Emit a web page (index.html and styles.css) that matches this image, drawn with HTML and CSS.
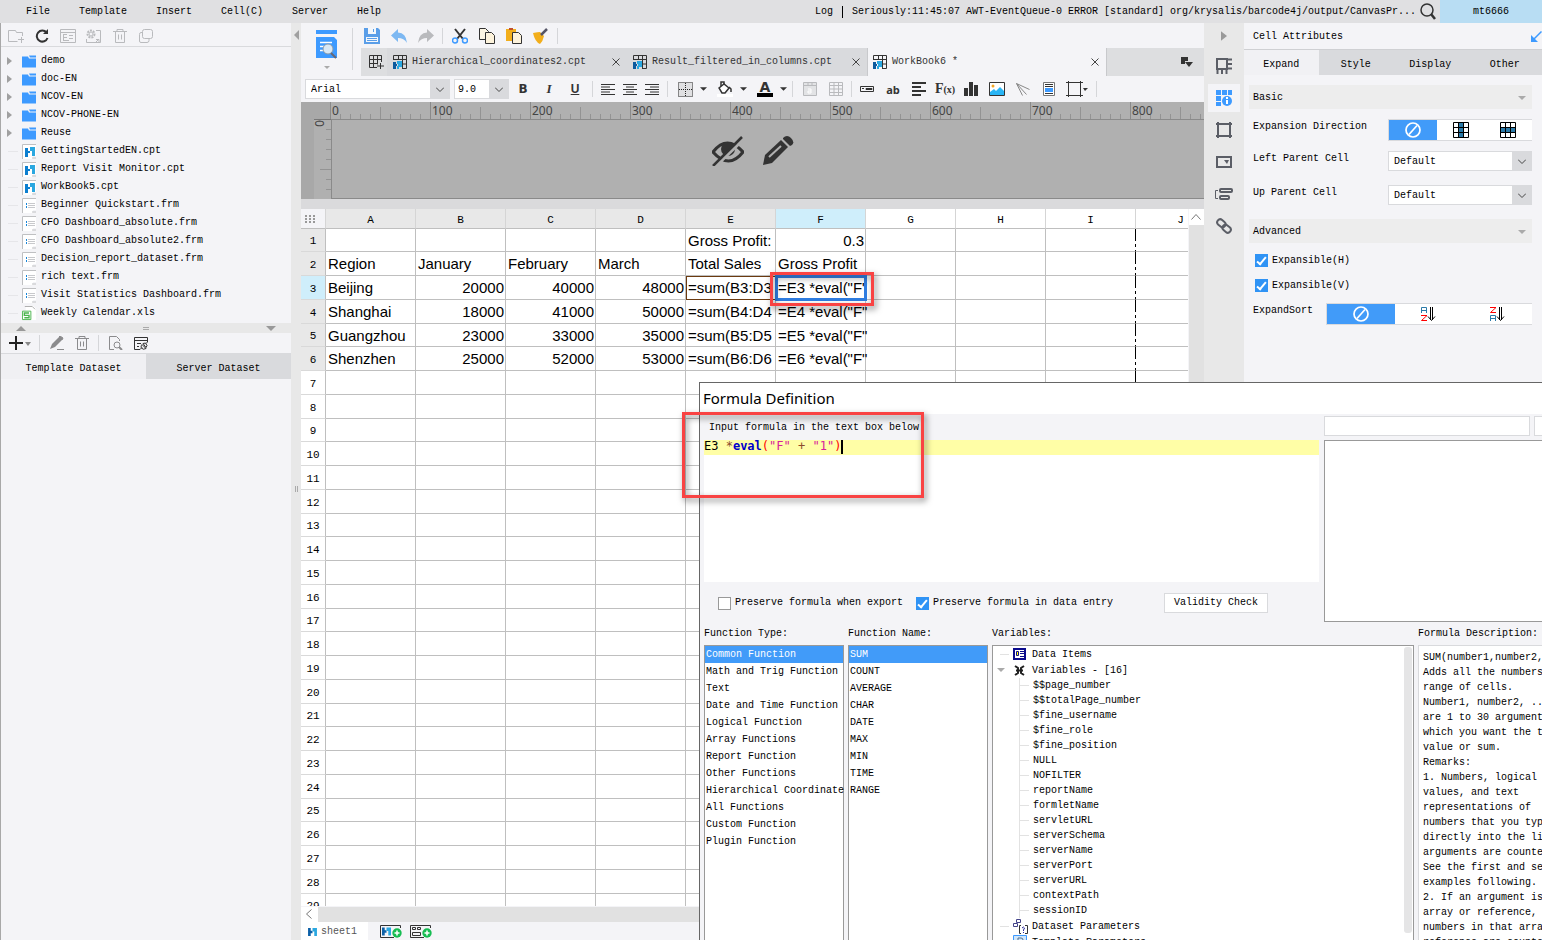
FILE: index.html
```html
<!DOCTYPE html>
<html lang="en">
<head>
    <meta charset="UTF-8">
    <meta name="viewport" content="width=device-width, initial-scale=1.0">
    <title>Report Designer</title>
    <link rel="stylesheet" href="styles.css">
</head>
<body>
    <svg class="defs" width="0" height="0">
        <symbol id="folder" viewBox="0 0 14 12"><path d="M0 1h6l1 2h7v9H0z" fill="#3d9aff"/><path d="M7 0h7v2H8z" fill="#3d9aff"/></symbol>
        <symbol id="logo" viewBox="0 0 10 9"><path d="M0 0h3v3h2v3H3v3H0z" fill="#0c60a8"/><path d="M5 0h5v9H7V4H5z" fill="#2aa7e0"/></symbol>
        <symbol id="cpt" viewBox="0 0 14 15"><path d="M0 0h14v12h-3v3H0z" fill="#fff"/><path d="M.5 15V.5H14M10 14h4" stroke="#bfc0c2" fill="none"/><path d="M3 4h3v3h2v2H6v4H3z" fill="#0c7fd0"/><path d="M8 3h5v9h-3V7H8z" fill="#2aa7e0"/></symbol>
        <symbol id="frm" viewBox="0 0 14 15"><path d="M0 0h14v12h-3v3H0z" fill="#fff"/><path d="M.5 15V.5H14M10 14h4" stroke="#bfc0c2" fill="none"/><path d="M4.500 5v2M4.500 8v2" stroke="#1685d8"/><path d="M6 5.500h7M6 9.500h7M6 7.500h7" stroke="#c8c9cc"/></symbol>
        <symbol id="xls" viewBox="0 0 15 16"><path d="M4 0h8l3 3v12H4z" fill="#fff"/><path d="M3 0.500h8l3 3" stroke="#aaa" fill="none"/><path d="M0.500 5.500h9v9h-9z" fill="#fff" stroke="#49b44c"/><path d="M7.500 7.500h-5V10h5v2.500h-5" stroke="#49b44c" stroke-width="1.500" fill="none"/></symbol>
        <symbol id="book" viewBox="0 0 14 14"><path d="M.5 5V.5h13v13H9M.5 4.500h13M5.500 .5v4M9.500 .5v13M9 9h4.500" stroke="#333" fill="none"/><path d="M0 7h3v2h1v2H3v3H0z" fill="#0c5a9e"/><path d="M4 6h5v6H6v2H4v-3h1V9H4z" fill="#2aa7e0"/></symbol>
        <symbol id="close" viewBox="0 0 8 8"><path d="M.5 .5l7 7M7.500 .5l-7 7" stroke="#444" fill="none"/></symbol>
        <symbol id="chev" viewBox="0 0 8 5"><path d="M0 .5l4 4 4-4" stroke="#444" fill="none"/></symbol>
        <symbol id="down" viewBox="0 0 8 4"><path d="M0 0h8L4 4z" fill="currentColor"/></symbol>
        <symbol id="right" viewBox="0 0 5 8"><path d="M0 0l5 4-5 4z" fill="currentColor"/></symbol>
        <symbol id="trash" viewBox="0 0 14 14"><path d="M0 2.500h14M4 2.500v-2h6v2M2.500 3v10.500h9V3M5.500 5.500v5M8.500 5.500v5" stroke="currentColor" fill="none"/></symbol>
        <symbol id="ban" viewBox="0 0 16 16"><circle cx="8" cy="8" r="7" stroke="#fff" stroke-width="1.700" fill="none"/><path d="M12 3.500L4 12.500" stroke="#fff" stroke-width="1.700"/></symbol>
        <symbol id="plusdot" viewBox="0 0 10 10"><circle cx="5" cy="5" r="4.700" fill="#16bd52"/><path d="M5 2.500v5M2.500 5h5" stroke="#fff" stroke-width="1.500"/></symbol>
    </svg>

    <header class="menubar">
        <nav class="menu">
            <a href="#">File</a>
            <a href="#">Template</a>
            <a href="#">Insert</a>
            <a href="#">Cell(C)</a>
            <a href="#">Server</a>
            <a href="#">Help</a>
        </nav>
        <div class="log"><span>Log</span><i></i><span>Seriously:11:45:07 AWT-EventQueue-0 ERROR [standard] org/krysalis/barcode4j/output/CanvasPr...</span></div>
        <button class="search" aria-label="Search"><svg width="16" height="17"><circle cx="7" cy="7" r="6" stroke="#333" stroke-width="1.500" fill="none"/><path d="M11 11l4 5" stroke="#333" stroke-width="2.500"/></svg></button>
        <button class="user">mt6666</button>
    </header>

    <main class="workspace">
        <aside class="left">
            <div class="tools files-tools">
                <button aria-label="New folder"><svg width="16" height="13"><path d="M14.500 6V2.500h-6l-1-2h-7v11h9M13.500 7v6M10 9.500h6" stroke="#b9babd" fill="none"/></svg></button>
                <button aria-label="Refresh"><svg width="14" height="14"><path d="M11.500 3.500A5.500 5.500 0 1 0 12.500 9" stroke="#333" stroke-width="2" fill="none"/><path d="M13 0v5H8z" fill="#333"/></svg></button>
                <button aria-label="Location"><svg width="16" height="14"><path d="M.5 .5h15v13H.500zM.5 3.500h15M3 5.500h4M3.500 6v6M3 8.500h4M3 11.500h6M9 6.500h4M9 9.500h4" stroke="#b9babd" fill="none"/></svg></button>
                <button aria-label="Permission"><svg width="16" height="14"><circle cx="5" cy="5" r="3.500" stroke="#b9babd" stroke-width="2" stroke-dasharray="2 1" fill="none"/><circle cx="5" cy="5" r="2" stroke="#b9babd" fill="none"/><path d="M10 1.500h4.500v12H.500V10M10 10.500h3v3M10 13l3-3" stroke="#b9babd" fill="none"/></svg></button>
                <button aria-label="Delete"><svg width="14" height="14" color="#b9babd"><use href="#trash"/></svg></button>
                <button aria-label="Copy"><svg width="14" height="14"><rect x="3.500" y=".5" width="10" height="9" rx="2" stroke="#b9babd" fill="none"/><path d="M3 3.500H2q-1.500 0-1.500 2V12q0 1.500 1.500 1.500h6q2 0 2-2v-2" stroke="#b9babd" fill="none"/></svg></button>
            </div>
            <ul class="file-tree">
                <li class="dir"><svg class="arr"><use href="#right"/></svg><svg class="ico"><use href="#folder"/></svg>demo</li>
                <li class="dir"><svg class="arr"><use href="#right"/></svg><svg class="ico"><use href="#folder"/></svg>doc-EN</li>
                <li class="dir"><svg class="arr"><use href="#right"/></svg><svg class="ico"><use href="#folder"/></svg>NCOV-EN</li>
                <li class="dir"><svg class="arr"><use href="#right"/></svg><svg class="ico"><use href="#folder"/></svg>NCOV-PHONE-EN</li>
                <li class="dir"><svg class="arr"><use href="#right"/></svg><svg class="ico"><use href="#folder"/></svg>Reuse</li>
                <li><i></i><svg class="ico"><use href="#cpt"/></svg>GettingStartedEN.cpt</li>
                <li><i></i><svg class="ico"><use href="#cpt"/></svg>Report Visit Monitor.cpt</li>
                <li><i></i><svg class="ico"><use href="#cpt"/></svg>WorkBook5.cpt</li>
                <li><i></i><svg class="ico"><use href="#frm"/></svg>Beginner Quickstart.frm</li>
                <li><i></i><svg class="ico"><use href="#frm"/></svg>CFO Dashboard_absolute.frm</li>
                <li><i></i><svg class="ico"><use href="#frm"/></svg>CFO Dashboard_absolute2.frm</li>
                <li><i></i><svg class="ico"><use href="#frm"/></svg>Decision_report_dataset.frm</li>
                <li><i></i><svg class="ico"><use href="#frm"/></svg>rich text.frm</li>
                <li><i></i><svg class="ico"><use href="#frm"/></svg>Visit Statistics Dashboard.frm</li>
                <li><i></i><svg class="ico"><use href="#xls"/></svg>Weekly Calendar.xls</li>
            </ul>
            <div class="splitter">
                <svg width="10" height="5"><path d="M0 5l5-5 5 5z" fill="#999"/></svg>
                <svg width="6" height="3"><path d="M0 .5h6M0 2.500h6" stroke="#aaa"/></svg>
                <svg width="10" height="5"><path d="M0 0h10L5 5z" fill="#999"/></svg>
            </div>
            <div class="tools data-tools">
                <button class="add" aria-label="Add dataset"><svg width="22" height="14"><path d="M7 0v14M0 7h14" stroke="#222" stroke-width="2"/><path d="M16 6h6l-3 4z" fill="#888"/></svg></button>
                <span class="sep"></span>
                <button aria-label="Edit"><svg width="14" height="14"><path d="M0 13l2-5 7-7 3 3-7 7z" fill="#8b8b8d"/><path d="M10 0l3 2-1 2-3-3zM7 13.500h7" fill="#8b8b8d" stroke="#8b8b8d"/></svg></button>
                <button aria-label="Delete"><svg width="14" height="14" color="#8b8b8d"><use href="#trash"/></svg></button>
                <span class="sep"></span>
                <button aria-label="Preview"><svg width="14" height="14"><path d="M5 13.500H.500V.500h7l3 3V5" stroke="#8b8b8d" fill="none"/><circle cx="8" cy="9" r="3" stroke="#8b8b8d" fill="none"/><path d="M10 11l3 3" stroke="#8b8b8d" stroke-width="2"/></svg></button>
                <button aria-label="Connection"><svg width="14" height="13"><path d="M13.500 5V.5H.500v12H6M.5 3.500h13M3 6.500h4M3 9.500h2" stroke="#333" fill="none"/><path d="M6 12.500l2-2M12 6.500l2-2M8 7.500l4 4q-3 2-5-1 0-2 1-3zM9 6.500q3-2 4 2l-1 2z" stroke="#333" fill="none"/></svg></button>
            </div>
            <div class="data-tabs">
                <button class="on">Template Dataset</button>
                <button>Server Dataset</button>
            </div>
        </aside>

        <div class="gutter"><svg width="5" height="10"><path d="M5 0v10L0 5z" fill="#a0a0a0"/></svg><svg width="3" height="6"><path d="M.5 0v6M2.500 0v6" stroke="#aaa"/></svg></div>

        <section class="center">
            <div class="top">
                <button class="preview" aria-label="Preview">
                    <svg width="24" height="40"><path d="M1 0h21v4H1zM1 7h18l3 3v18H1z" fill="#3d9aff"/><path d="M5 12.500h12M5 16.500h5M5 20.500h5" stroke="#fff" stroke-width="1.500"/><circle cx="13" cy="19" r="5" fill="#d8e8f5" stroke="#8b9aa8"/><path d="M16 23l5 5" stroke="#667" stroke-width="2"/><path d="M9 36h6l-3 3z" fill="#aaa"/></svg>
                </button>
                <div class="top-right">
                    <div class="tools quick">
                        <button aria-label="Save"><svg width="16" height="16"><path d="M0 0h14l2 2v14H0z" fill="#5a9ee8"/><path d="M4 0h8v6H4zM2 9h12v5H2z" fill="#f4f7fb"/><path d="M9.500 1v3M3 10.500h10M3 12.500h10" stroke="#5a9ee8"/></svg></button>
                        <button aria-label="Undo"><svg width="16" height="14"><path d="M7 0v3.500q8 0 9 10.500-3-5-9-5v4L0 6.500z" fill="#7db8f2"/></svg></button>
                        <button aria-label="Redo"><svg width="16" height="14"><path d="M9 0v3.500Q1 3.500 0 14q3-5 9-5v4l7-6.500z" fill="#b9babd"/></svg></button>
                        <span class="sep"></span>
                        <button aria-label="Cut"><svg width="16" height="16"><path d="M3 1l8 10M13 1L5 11" stroke="#333" stroke-width="2"/><circle cx="3" cy="12.500" r="2.500" stroke="#3d9aff" stroke-width="1.500" fill="none"/><circle cx="13" cy="12.500" r="2.500" stroke="#3d9aff" stroke-width="1.500" fill="none"/></svg></button>
                        <button aria-label="Copy"><svg width="16" height="16"><path d="M.5 .5h6l3 3v8h-9z" fill="#fdf6e3" stroke="#333"/><path d="M6.500 4.500h6l3 3v8h-9z" fill="#fdf3dc" stroke="#333"/></svg></button>
                        <button aria-label="Paste"><svg width="16" height="16"><path d="M0 1h10v12H0z" fill="#f2ae1b"/><path d="M3 0h4v2H3z" fill="#c0502c"/><path d="M6.500 4.500h6l3 3v8h-9z" fill="#fdf3dc" stroke="#333"/></svg></button>
                        <button aria-label="Format painter"><svg width="16" height="16"><path d="M0 5q5-1 7-1l4 4q-1 5-4 8-5-2-7-11z" fill="#f2ae1b"/><path d="M8 7l6-6" stroke="#556" stroke-width="2.500"/></svg></button>
                        <span class="sep"></span>
                    </div>
                    <div class="doc-tabs">
                        <button class="new-tab" aria-label="New"><svg width="15" height="14"><path d="M8 12.500H.500V.500h12V7M.5 4.500h12M.5 8.500h8M4.500 .5v12M8.500 .5v9M11.500 8v6M8 11h7" stroke="#333" fill="none"/></svg></button>
                        <div class="doc-tab"><svg width="14" height="14"><use href="#book"/></svg><span>Hierarchical_coordinates2.cpt</span><button aria-label="Close"><svg width="8" height="8"><use href="#close"/></svg></button></div>
                        <div class="doc-tab"><svg width="14" height="14"><use href="#book"/></svg><span>Result_filtered_in_columns.cpt</span><button aria-label="Close"><svg width="8" height="8"><use href="#close"/></svg></button></div>
                        <div class="doc-tab on"><svg width="14" height="14"><use href="#book"/></svg><span>WorkBook6 *</span><button aria-label="Close"><svg width="8" height="8"><use href="#close"/></svg></button></div>
                        <button class="tab-list" aria-label="Tab list"><svg width="12" height="10"><path d="M0 0h7v4H4v3H0z" fill="#333"/><path d="M4 5h8L8 10z" fill="#333"/></svg></button>
                    </div>
                </div>
            </div>

            <div class="tools format">
                <span class="combo font"><select aria-label="Font"><option>Arial</option></select><i><svg width="8" height="5"><use href="#chev"/></svg></i></span>
                <span class="combo size"><select aria-label="Size"><option>9.0</option></select><i><svg width="8" height="5"><use href="#chev"/></svg></i></span>
                <button class="b">B</button>
                <button class="i">I</button>
                <button class="u">U</button>
                <span class="sep"></span>
                <button class="al" aria-label="Align left"><svg width="14" height="11"><path d="M0 .5h14M0 3h9M0 5.500h14M0 8h9M0 10.500h14" stroke="#333"/></svg></button>
                <button class="al" aria-label="Align center"><svg width="14" height="11"><path d="M0 .5h14M3 3h8M0 5.500h14M3 8h8M0 10.500h14" stroke="#333"/></svg></button>
                <button class="al" aria-label="Align right"><svg width="14" height="11"><path d="M0 .5h14M5 3h9M0 5.500h14M5 8h9M0 10.500h14" stroke="#333"/></svg></button>
                <span class="sep"></span>
                <button aria-label="Border"><svg width="15" height="15"><path d="M.5 .5h14v14H.500zM7.500 1v13M1 7.500h13" stroke="#222" stroke-dasharray="1 1" fill="#e0e0e2"/></svg></button>
                <button class="dd" aria-label="Border options"><svg width="7" height="4"><use href="#down"/></svg></button>
                <button aria-label="Fill"><svg width="16" height="16"><path d="M2 7l5-4 5 4-4 5H5z" fill="#fff" stroke="#333" stroke-width="1.500"/><path d="M4 5V1h3v3M12 6l2 2v3" stroke="#333" stroke-width="1.500" fill="none"/><path d="M0 13h16v3H0z" fill="#fff"/></svg></button>
                <button class="dd" aria-label="Fill options"><svg width="7" height="4"><use href="#down"/></svg></button>
                <button class="fc">A</button>
                <button class="dd" aria-label="Color options"><svg width="7" height="4"><use href="#down"/></svg></button>
                <span class="sep"></span>
                <button aria-label="Merge"><svg width="14" height="14"><path d="M.5 .5h13v13H.500zM.5 3.500h13M5 0v3M9 0v3" stroke="#b9babd" fill="#e2e3e5"/><path d="M5 7h3v4H5V9h3" stroke="#fff" fill="none"/></svg></button>
                <button aria-label="Unmerge"><svg width="14" height="14"><path d="M.5 .5h13v13H.500zM.5 3.500h13M.5 7h13M.5 10.500h13M5 0v14M9.500 0v14" stroke="#b9babd" fill="none"/></svg></button>
                <span class="sep tight"></span>
                <button aria-label="Widget"><svg width="14" height="6"><path d="M.5 .5h13v5H.500zM2 2.500h2M6 2.500h6v1H6z" stroke="#333" fill="none"/></svg></button>
                <button class="ab">ab</button>
                <button aria-label="Rich text"><svg width="14" height="14"><path d="M0 1h14M0 5h9M0 9h14M0 13h9" stroke="#333" stroke-width="2"/></svg></button>
                <button class="fx">F<small>(x)</small></button>
                <button aria-label="Chart"><svg width="14" height="14"><path d="M0 6h4v8H0zM5 0h4v14H5zM10 3h4v11h-4z" fill="#333"/></svg></button>
                <button aria-label="Image"><svg width="16" height="14"><path d="M.5 .5h15v13H.500z" fill="#fff" stroke="#333"/><path d="M1 10l4-3 2 2 4-4 4 4v4H1z" fill="#29b5f5"/><circle cx="4" cy="4" r="1.500" fill="#f5a623"/></svg></button>
                <button aria-label="Slope"><svg width="14" height="13"><path d="M.5 .5l6 12M.5 .5l13 6M.5 .5l10 11" stroke="#888" fill="none"/></svg></button>
                <button aria-label="Sub report"><svg width="12" height="14"><path d="M.5 .5h11v13H.500z" fill="#fff" stroke="#777"/><path d="M2 2.500h8M2 4.500h8M2 11.500h8" stroke="#333"/><path d="M2 6h8v4H2z" fill="#3d9aff"/></svg></button>
                <button class="box" aria-label="Floating element"><svg width="23" height="16"><path d="M2.500 0v16M14.500 0v16M0 1.500h17M0 14.500h17" stroke="#333" fill="none"/><path d="M17 7h5l-3 3z" fill="#333"/></svg></button>
                <span class="sep"></span>
            </div>

            <div class="report">
                <div class="ruler-x"><span>0</span><span>100</span><span>200</span><span>300</span><span>400</span><span>500</span><span>600</span><span>700</span><span>800</span></div>
                <div class="report-row">
                    <div class="ruler-y"><span>0</span></div>
                    <div class="paper"></div>
                </div>
                <div class="report-icons">
                    <svg width="32" height="30"><path d="M1 16q14-18 30 0-14 18-30 0z" stroke="#333" stroke-width="3" fill="none"/><circle cx="16" cy="13" r="7" fill="#333"/><path d="M3 31L32 3" stroke="#b0b0b0" stroke-width="3"/><path d="M1 30L30 1" stroke="#333" stroke-width="2.500"/></svg>
                    <svg width="32" height="30"><path d="M1 29l2-10L19 4l7 7-16 16z" fill="#333"/><path d="M7 21L19 10" stroke="#b0b0b0" stroke-width="2"/><path d="M21 2q4-4 8 0t1 7l-2 1-7-7z" fill="#333"/></svg>
                </div>
            </div>

            <div class="sheet">
                <div class="grid">
                    <table>
                        <thead>
                            <tr><th class="corner"><svg width="11" height="8"><path d="M0 1h11M0 4h11M0 7h11" stroke="#999" stroke-width="2" stroke-dasharray="2 2"/></svg></th><th>A</th><th>B</th><th>C</th><th>D</th><th>E</th><th class="sel">F</th><th class="out">G</th><th class="out">H</th><th class="out">I</th><th class="out">J</th></tr>
                        </thead>
                        <tbody id="rows">
                            <tr><th>1</th><td></td><td></td><td></td><td></td><td>Gross Profit:</td><td class="num">0.3</td><td></td><td></td><td></td><td></td></tr>
                            <tr><th>2</th><td>Region</td><td>January</td><td>February</td><td>March</td><td>Total Sales</td><td>Gross Profit</td><td></td><td></td><td></td><td></td></tr>
                            <tr><th class="sel">3</th><td>Beijing</td><td class="num">20000</td><td class="num">40000</td><td class="num">48000</td><td class="parent">=sum(B3:D3</td><td class="current">=E3 *eval("F"</td><td></td><td></td><td></td><td></td></tr>
                            <tr><th>4</th><td>Shanghai</td><td class="num">18000</td><td class="num">41000</td><td class="num">50000</td><td>=sum(B4:D4</td><td>=E4 *eval("F"</td><td></td><td></td><td></td><td></td></tr>
                            <tr><th>5</th><td>Guangzhou</td><td class="num">23000</td><td class="num">33000</td><td class="num">35000</td><td>=sum(B5:D5</td><td>=E5 *eval("F"</td><td></td><td></td><td></td><td></td></tr>
                            <tr><th>6</th><td>Shenzhen</td><td class="num">25000</td><td class="num">52000</td><td class="num">53000</td><td>=sum(B6:D6</td><td>=E6 *eval("F"</td><td></td><td></td><td></td><td></td></tr>
                        </tbody>
                    </table>
                </div>
                <div class="vscroll"><svg width="10" height="6"><path d="M.5 5.500l4.500-5 4.500 5" stroke="#777" fill="none"/></svg></div>
            </div>
            <div class="hscroll"><svg width="6" height="10"><path d="M5.500 .5L.5 5l5 4.500" stroke="#777" fill="none"/></svg></div>
            <div class="sheet-tabs">
                <button class="on"><svg width="9" height="8"><use href="#logo"/></svg>sheet1</button>
                <button aria-label="Add sheet"><svg width="22" height="13"><path d="M14 12.500H.500V.500h20V3" stroke="#333" fill="none"/><use href="#logo" x="2" y="2" width="9" height="9"/><use href="#plusdot" x="12" y="3" width="10" height="10"/></svg></button>
                <button aria-label="Add form sheet"><svg width="22" height="13"><path d="M14 12.500H.500V.500h20V3M2.500 2.500h3v2h-3zM7.500 2.500h3v2h-3zM2.500 7.500h8v3h-8z" stroke="#333" fill="none"/><use href="#plusdot" x="12" y="3" width="10" height="10"/></svg></button>
            </div>
        </section>

        <nav class="strip">
            <button class="fold" aria-label="Collapse"><svg width="6" height="10" color="#999"><use href="#right"/></svg></button>
            <button aria-label="Cell element"><svg width="16" height="16"><path d="M1 1h10v10H1zM11 1.500h5M11 6h5M11 10.500h5M1.500 11v5M6 11v5M10.500 11v5" stroke="#5b5e66" stroke-width="2" fill="none"/></svg></button>
            <button class="on" aria-label="Cell attributes"><svg width="16" height="16"><path d="M0 0h5v5H0zM6 0h5v5H6zM12 0h4v5h-4zM0 6h5v5H0zM0 12h5v4H0z" fill="#3d9aff"/><circle cx="11" cy="11" r="5" fill="#3d9aff"/><path d="M11 7v2M11 10v4" stroke="#fff" stroke-width="2"/></svg></button>
            <button aria-label="Float element"><svg width="16" height="16"><path d="M2 0v16M14 0v16M0 2h16M0 14h16" stroke="#5b5e66" stroke-width="2" fill="none"/></svg></button>
            <button aria-label="Widget settings"><svg width="16" height="12"><rect x="1" y="1" width="14" height="10" stroke="#5b5e66" stroke-width="2" fill="none"/><path d="M8 4h5l-2 4z" fill="#5b5e66"/></svg></button>
            <button aria-label="Condition attributes"><svg width="18" height="13"><path d="M3 2.500H.500v8H3" stroke="#5b5e66" fill="none"/><rect x="5" y="1" width="12" height="3" rx="1" stroke="#5b5e66" stroke-width="2" fill="none"/><rect x="5" y="8" width="9" height="3" rx="1" stroke="#5b5e66" stroke-width="2" fill="none"/></svg></button>
            <button aria-label="Hyperlink"><svg width="16" height="16"><rect x="1" y="2" width="9" height="6" rx="3" transform="rotate(40 5 5)" stroke="#5b5e66" stroke-width="2" fill="none"/><rect x="6" y="8" width="9" height="6" rx="3" transform="rotate(40 11 11)" stroke="#5b5e66" stroke-width="2" fill="none"/></svg></button>
        </nav>

        <aside class="attrs">
            <div class="attrs-title">Cell Attributes<svg width="11" height="11"><path d="M10.500 .5L3 8" stroke="#3d9aff" stroke-width="1.500"/><path d="M0 4v7h7z" fill="#3d9aff"/></svg></div>
            <div class="attrs-tabs"><button class="on">Expand</button><button>Style</button><button>Display</button><button>Other</button></div>
            <div class="attrs-body">
                <h3>Basic<svg width="8" height="4" color="#aaa"><use href="#down"/></svg></h3>
                <div class="field basic">
                    <span>Expansion Direction</span>
                    <div class="seg">
                        <button class="on" aria-label="None"><svg width="16" height="16"><use href="#ban"/></svg></button>
                        <button aria-label="Vertical"><svg width="16" height="16"><path d="M6 1h5v14H6z" fill="#2b7aa8"/><path d="M.5 .5h15v15H.500zM5.500 0v16M10.500 0v16M0 5.500h16M0 10.500h16" stroke="#000" fill="none"/></svg></button>
                        <button aria-label="Horizontal"><svg width="16" height="16"><path d="M1 6h14v5H1z" fill="#2b7aa8"/><path d="M.5 .5h15v15H.500zM5.500 0v16M10.500 0v16M0 5.500h16M0 10.500h16" stroke="#000" fill="none"/></svg></button>
                    </div>
                </div>
                <div class="field basic">
                    <label for="left-parent">Left Parent Cell</label>
                    <span class="combo"><select id="left-parent"><option>Default</option></select><i><svg width="8" height="5"><use href="#chev"/></svg></i></span>
                </div>
                <div class="field basic">
                    <label for="up-parent">Up Parent Cell</label>
                    <span class="combo"><select id="up-parent"><option>Default</option></select><i><svg width="8" height="5"><use href="#chev"/></svg></i></span>
                </div>
                <h3>Advanced<svg width="8" height="4" color="#aaa"><use href="#down"/></svg></h3>
                <label class="check"><input type="checkbox" checked>Expansible(H)</label>
                <label class="check"><input type="checkbox" checked>Expansible(V)</label>
                <div class="field sort">
                    <span>ExpandSort</span>
                    <div class="seg">
                        <button class="on" aria-label="No sort"><svg width="16" height="16"><use href="#ban"/></svg></button>
                        <button aria-label="Ascending"><svg width="16" height="15"><path d="M.5 6V.500h5V6M.5 3.500h5" stroke="#2b7aa8" fill="none"/><path d="M0 8.500h6l-5.500 5H6" stroke="#f00" fill="none"/><path d="M9.500 0v13M11.500 0v13M7 9.500l3.500 4 3.500-4" stroke="#000" fill="none"/></svg></button>
                        <button aria-label="Descending"><svg width="16" height="15"><path d="M0 .5h6L.5 5.500H6" stroke="#f00" fill="none"/><path d="M.5 14V8.500h5V14M.5 11.500h5" stroke="#2b7aa8" fill="none"/><path d="M9.500 0v13M11.500 0v13M7 9.500l3.500 4 3.500-4" stroke="#000" fill="none"/></svg></button>
                    </div>
                </div>
            </div>
        </aside>
    </main>

    <div class="dialog" role="dialog" aria-label="Formula Definition">
        <h2>Formula Definition</h2>
        <div class="dialog-body">
            <div class="upper">
                <div class="formula">
                    <p>Input formula in the text box below:</p>
                    <div class="editor" contenteditable="true"><div class="line">E3 <span class="op">*</span><b>eval</b><span class="par">(</span><span class="str">"F"</span> <span class="op">+</span> <span class="str">"1"</span><span class="par">)</span><i class="cursor"></i></div></div>
                    <div class="options">
                        <label class="check"><input type="checkbox">Preserve formula when export</label>
                        <label class="check"><input type="checkbox" checked>Preserve formula in data entry</label>
                        <button class="validity">Validity Check</button>
                    </div>
                </div>
                <div class="finder">
                    <div class="finder-row"><input type="text" aria-label="Search function"><button aria-label="Search"></button></div>
                    <div class="results"></div>
                </div>
            </div>
            <div class="lower">
                <div class="col fn">
                    <h4>Function Type:</h4>
                    <ul class="list">
                        <li class="on">Common Function</li>
                        <li>Math and Trig Function</li>
                        <li>Text</li>
                        <li>Date and Time Function</li>
                        <li>Logical Function</li>
                        <li>Array Functions</li>
                        <li>Report Function</li>
                        <li>Other Functions</li>
                        <li>Hierarchical Coordinate</li>
                        <li>All Functions</li>
                        <li>Custom Function</li>
                        <li>Plugin Function</li>
                    </ul>
                </div>
                <div class="col fn">
                    <h4>Function Name:</h4>
                    <ul class="list">
                        <li class="on">SUM</li>
                        <li>COUNT</li>
                        <li>AVERAGE</li>
                        <li>CHAR</li>
                        <li>DATE</li>
                        <li>MAX</li>
                        <li>MIN</li>
                        <li>TIME</li>
                        <li>RANGE</li>
                    </ul>
                </div>
                <div class="col vars">
                    <h4>Variables:</h4>
                    <div class="vars-box">
                        <ul class="var-tree">
                            <li class="node"><i></i><svg width="13" height="12"><path d="M1 1h11v10H1z" fill="#fff" stroke="#0a0a8c" stroke-width="2"/><path d="M3.500 3.500h2v4h-2z" fill="#ff0" stroke="#0a0a8c"/><path d="M7 3.500h4M7 5.500h4M7 8.500h4" stroke="#0a0a8c"/></svg>Data Items</li>
                            <li class="node"><svg class="open" width="8" height="4" color="#aaa"><use href="#down"/></svg><svg width="13" height="11"><path d="M2 1l3 2v5l-3 2M11 1L8 3v5l3 2M3 5.500h7" stroke="#222" stroke-width="2" fill="none"/></svg>Variables - [16]</li>
                            <li>$$page_number</li>
                            <li>$$totalPage_number</li>
                            <li>$fine_username</li>
                            <li>$fine_role</li>
                            <li>$fine_position</li>
                            <li>NULL</li>
                            <li>NOFILTER</li>
                            <li>reportName</li>
                            <li>formletName</li>
                            <li>servletURL</li>
                            <li>serverSchema</li>
                            <li>serverName</li>
                            <li>serverPort</li>
                            <li>serverURL</li>
                            <li>contextPath</li>
                            <li>sessionID</li>
                            <li class="node"><i></i><svg width="15" height="15"><path d="M3.500 .5h4v3h-4zM.5 4.500h4v3h-4z" fill="#fff" stroke="#44448a"/><path d="M8 6.500H6.500v8H8M12 6.500h2.500v8H12" stroke="#333" fill="none"/><path d="M9 9q1.500-2 2.500 0l-1 2v1M10.500 13v1" stroke="#2a2a9c" fill="none"/></svg>Dataset Parameters</li>
                            <li class="node"><i></i><svg width="14" height="14"><path d="M.5 .5h13v13H.500z" fill="#cfe6fb" stroke="#3d9aff"/><path d="M5 11V3h3q2 0 2 2t-2 2H5" stroke="#55708a" fill="none"/></svg>Template Parameters</li>
                        </ul>
                        <div class="bar"></div>
                    </div>
                </div>
                <div class="col desc">
                    <h4>Formula Description:</h4>
                    <pre>SUM(number1,number2,...)
Adds all the numbers in a
range of cells.
Number1, number2, ...
are 1 to 30 arguments for
which you want the total
value or sum.
Remarks:
1. Numbers, logical
values, and text
representations of
numbers that you type
directly into the list of
arguments are counted.
See the first and second
examples following.
2. If an argument is an
array or reference, only
numbers in that array or
reference are counted.</pre>
                </div>
            </div>
        </div>
    </div>

    <div class="mark mark-cell"></div>
    <div class="mark mark-formula"></div>

    <script>
        // fill the rest of the sheet with empty rows
        const rows = document.getElementById('rows');
        for (let n = 7; n <= 60; n++) {
            const tr = document.createElement('tr');
            tr.innerHTML = '<th class="out">' + n + '</th>' + '<td></td>'.repeat(10);
            rows.appendChild(tr);
        }
    </script>
</body>
</html>
```

FILE: styles.css
```css
* {
    box-sizing: border-box;
}
body {
    margin: 0;
    height: 100vh;
    overflow: hidden;
    position: relative;
    display: flex;
    flex-direction: column;
    background: #f4f4f7;
    color: #000;
    font: 10px/14px "Liberation Mono", "Courier New", monospace;
}
button, input, select {
    font: inherit;
    color: inherit;
    border: 0;
    padding: 0;
    margin: 0;
    background: none;
    border-radius: 0;
}
ul, h2, h3, h4, p, pre {
    margin: 0;
    padding: 0;
    font: inherit;
    list-style: none;
}
svg {
    display: block;
    flex: none;
}
.defs {
    position: absolute;
}

/* menu bar */
.menubar {
    display: flex;
    align-items: center;
    height: 23px;
    flex: none;
    background: #e0e0e2;
}
.menu {
    display: flex;
    gap: 29px;
    padding-left: 26px;
    flex: 1;
}
.menu a {
    color: #000;
    text-decoration: none;
}
.log {
    display: flex;
    align-items: center;
    gap: 9px;
    white-space: nowrap;
}
.log i {
    width: 1px;
    height: 12px;
    background: #000;
}
.search {
    margin: 0 4px;
}
.user {
    width: 102px;
    height: 23px;
    background: #b8ddf3;
}

.workspace {
    flex: 1;
    min-height: 0;
    display: grid;
    grid-template-columns: 291px 10px minmax(0, 1fr) 40px 298px;
    grid-template-rows: minmax(0, 1fr);
}
.tools {
    display: flex;
    align-items: center;
}
.tools button {
    display: flex;
    align-items: center;
    justify-content: center;
}
.sep {
    width: 1px;
    height: 16px;
    margin: 0 4px;
    background: #d5d6d9;
}

/* left panel */
.left {
    border-left: 1px solid #a8a8a8;
}
.files-tools {
    height: 24px;
    padding: 3px 0 0 2px;
    border-bottom: 1px solid #d9dadd;
}
.files-tools button {
    width: 26px;
}
.file-tree {
    padding: 5px 0 1px 6px;
}
.file-tree li {
    display: flex;
    align-items: center;
    height: 18px;
    white-space: pre;
}
.file-tree .arr {
    width: 5px;
    height: 8px;
    margin-right: 10px;
    color: #a0a0a0;
}
.file-tree i {
    width: 10px;
    height: 1px;
    margin: 0 4px 0 1px;
    background: #e6e6e9;
}
.file-tree .ico {
    width: 14px;
    height: 15px;
    margin-right: 5px;
}
.splitter {
    display: flex;
    align-items: center;
    justify-content: space-between;
    height: 10px;
    padding: 0 15px;
    background: #e8e8e8;
}
.data-tools {
    height: 21px;
    padding-left: 4px;
    border-bottom: 1px solid #d9dadd;
}
.data-tools button {
    width: 25px;
}
.data-tools .add {
    width: 30px;
}
.data-tabs {
    display: flex;
    height: 25px;
}
.data-tabs button {
    flex: 1;
    padding-top: 4px;
    background: #d9dadd;
}
.data-tabs .on {
    background: #f0f0f3;
}
.gutter {
    display: flex;
    flex-direction: column;
    align-items: center;
    justify-content: space-between;
    padding: 7px 0 448px;
    background: #e8e8e8;
}

/* toolbars */
.center {
    display: flex;
    flex-direction: column;
    min-width: 0;
}
.top {
    display: flex;
    height: 53px;
    flex: none;
}
.preview {
    width: 52px;
    height: 42px;
    margin: 5px 8px 0 0;
    border-right: 1px solid #d5d6d9;
    display: flex;
    justify-content: center;
    padding-top: 2px;
}
.top-right {
    flex: 1;
    min-width: 0;
}
.quick {
    height: 25px;
    margin-left: -3px;
}
.quick button {
    width: 27px;
}
.quick .sep {
    margin: 0 3px;
}
.doc-tabs {
    display: flex;
    height: 28px;
    background: #dddee0;
    color: #333;
}
.new-tab {
    width: 26px;
    padding-left: 8px;
}
.doc-tab {
    display: flex;
    align-items: center;
    width: 240px;
    padding: 0 7px 0 6px;
    background: #d9dadd;
}
.doc-tab span {
    flex: 1;
    margin-left: 5px;
    white-space: nowrap;
}
.doc-tab.on {
    background: #f4f4f7;
    border: solid #c8c9cc;
    border-width: 0 1px;
    padding-left: 5px;
}
.tab-list {
    margin-left: auto;
    padding-right: 11px;
}
.format {
    height: 26px;
    flex: none;
    padding-left: 4px;
    color: #333;
}
.format button {
    width: 26px;
    height: 22px;
}
.format .al {
    width: 22px;
}
.format .dd {
    width: 10px;
    margin-right: 4px;
}
.format .dd:has(+ .sep) {
    margin-right: 0;
}
.format .tight {
    margin: 0 2px;
}
.format .b {
    font: bold 12px "DejaVu Sans", sans-serif;
}
.format .ab {
    font: bold 11px "Open Sans", sans-serif;
}
.format .i {
    font: italic bold 13px "Liberation Serif", serif;
}
.format .u {
    font: bold 12px "Liberation Sans", sans-serif;
    text-decoration: underline;
}
.format .fc {
    width: 16px;
    height: 16px;
    margin: 0 5px;
    border-bottom: 4px solid #000;
    font: bold 14px "DejaVu Sans", sans-serif;
}
.format .fx {
    font: bold 14px "Liberation Serif", serif;
}
.fx small {
    font-size: 10px;
}
.format .box {
    width: 30px;
}
.combo {
    display: flex;
    height: 20px;
    border: 1px solid #d9dadd;
    background: #fff;
    color: #000;
}
.combo select {
    appearance: none;
    flex: 1;
    min-width: 0;
    padding: 1px 0 0 5px;
    outline: none;
}
.combo i {
    width: 19px;
    display: flex;
    align-items: center;
    justify-content: center;
    background: #d9dadd;
}
.font {
    width: 145px;
    margin-right: 4px;
}
.size {
    width: 55px;
    margin-right: 1px;
}
.size select {
    padding-left: 3px;
}

/* report header with rulers */
.report {
    position: relative;
    height: 97px;
    flex: none;
    display: flex;
    flex-direction: column;
    background: #a8a8a8;
}
.ruler-x {
    display: flex;
    height: 17px;
    margin-left: 29px;
    overflow: hidden;
    color: #444;
    font: 12px/18px "Noto Sans", sans-serif;
    background:
        linear-gradient(90deg, #8a8a8a 1px, transparent 1px) 0 0 / 100px 17px repeat-x,
        linear-gradient(90deg, #939393 1px, transparent 1px) 0 5px / 50px 12px repeat-x,
        linear-gradient(90deg, #939393 1px, transparent 1px) 0 12px / 10px 5px repeat-x,
        #b0b0b0;
}
.ruler-x span {
    flex: 0 0 100px;
    padding-left: 2px;
}
.report-row {
    flex: 1;
    display: flex;
}
.ruler-y {
    width: 17px;
    margin-left: 13px;
    border-top: 1px solid #777;
    color: #444;
    font: 12px/17px "Noto Sans", sans-serif;
    writing-mode: vertical-rl;
    background:
        linear-gradient(#939393 1px, transparent 1px) 6px 49px / 11px 50px repeat-y,
        linear-gradient(#939393 1px, transparent 1px) 12px 9px / 5px 10px repeat-y,
        #b0b0b0;
}
.ruler-y span {
    display: block;
    margin-right: 3px;
}
.paper {
    flex: 1;
    border: solid #8a8a8a;
    border-width: 1px 0 1px 1px;
    background: #b0b0b0;
}
.report-icons {
    position: absolute;
    inset: 0;
    display: flex;
    align-items: center;
    justify-content: center;
    gap: 18px;
}

/* sheet */
.sheet {
    display: flex;
    flex: 1;
    min-height: 0;
    padding-top: 10px;
    background: #dadadc;
}
.grid {
    flex: 1;
    overflow: hidden;
    background: #fff;
}
.grid table {
    width: 925px;
    table-layout: fixed;
    border-spacing: 0;
    font: 15px/19px "Liberation Sans", Arial, sans-serif;
}
.grid th {
    padding: 0;
    border: solid #bfbfbf;
    border-width: 0 1px 1px 0;
    background: #e8e8e8;
    font: 11px/12px "Liberation Mono", monospace;
}
.grid thead th {
    height: 20px;
    width: 90px;
    padding-top: 3px;
    border-right-color: #d5d5d5;
}
.grid thead th.corner {
    width: 25px;
    padding: 0 0 0 4px;
    background: #f4f4f7;
}
.grid tbody th {
    padding-top: 2px;
    border-bottom-color: #d9d9d9;
}
.grid tbody .out, .grid thead .out {
    background: #fff;
}
.grid tbody .sel, .grid thead .sel {
    background: #cfeefb;
}
.grid tbody tr {
    height: 24px;
}
.grid tbody tr:nth-child(4n+1) {
    height: 23px;
}
.grid td {
    padding: 0 0 0 2px;
    border: solid #bfbfbf;
    border-width: 0 1px 1px 0;
    white-space: nowrap;
}
/* page break line */
.grid td:nth-child(10) {
    border-right-color: transparent;
    background: linear-gradient(#000 12px, #fff 12px 15px, #000 15px 18px, #fff 18px 21px, #000 21px) 100% 0 / 1px 100% no-repeat border-box;
}
.grid .num {
    text-align: right;
    padding: 0 1px;
}
.grid .parent {
    outline: 1px solid #6b3a10;
    outline-offset: -1px;
}
.grid .current {
    outline: 3px solid #2f7de1;
    outline-offset: -2px;
}
.vscroll {
    width: 16px;
    background: #e1e1e1;
    border-left: 1px solid #f4f4f7;
}
.vscroll svg {
    width: 15px;
    height: 16px;
    padding: 5px 2px;
    background: #fff;
}
.hscroll {
    height: 16px;
    flex: none;
    background: #e1e1e1;
    border-top: 1px solid #f4f4f7;
}
.hscroll svg {
    width: 17px;
    height: 15px;
    padding: 2px 5px;
    background: #fff;
}
.sheet-tabs {
    display: flex;
    height: 18px;
    flex: none;
    color: #555;
}
.sheet-tabs button {
    display: flex;
    align-items: center;
    width: 30px;
    padding-top: 1px;
}
.sheet-tabs .on {
    width: 67px;
    margin-right: 12px;
    padding-left: 7px;
    gap: 4px;
    background: #fff;
}

/* icon strip */
.strip {
    display: flex;
    flex-direction: column;
    align-items: center;
    gap: 4px;
    background: #e8e8e8;
}
.strip button {
    width: 32px;
    height: 28px;
    display: flex;
    align-items: center;
    justify-content: center;
}
.strip .fold {
    height: 25px;
}
.strip .on {
    background: #f4f4f7;
}

/* cell attributes */
.attrs-title {
    display: flex;
    justify-content: space-between;
    align-items: center;
    height: 26px;
    padding: 1px 0 0 9px;
}
.attrs-tabs {
    display: flex;
    height: 26px;
    border-top: 1px solid #cfd0d3;
}
.attrs-tabs button {
    flex: 1;
    padding-top: 4px;
    background: #d9dadd;
}
.attrs-tabs .on {
    background: #f1f1f4;
}
.attrs-body {
    padding: 10px 10px 0 5px;
}
.attrs-body h3 {
    display: flex;
    align-items: center;
    justify-content: space-between;
    height: 24px;
    padding: 2px 6px 0 4px;
    background: #ededed;
}
.field {
    display: flex;
    margin: 10px 0 0 4px;
}
.field > :first-child {
    width: 135px;
    padding-top: 1px;
}
.field > :last-child {
    flex: 1;
}
.field + .field {
    margin-bottom: 14px;
}
.field.sort > :first-child {
    width: 73px;
}
.seg {
    display: flex;
    height: 22px;
    border: solid #d9dadd;
    border-width: 1px 0 1px 1px;
    background: #fff;
}
.seg button {
    flex: 1;
    display: flex;
    align-items: center;
    justify-content: center;
}
.seg .on {
    background: #419bf9;
}
.check {
    display: flex;
    align-items: center;
    gap: 4px;
}
.attrs-body .check {
    height: 15px;
    margin: 10px 0 0 6px;
}
.check input {
    appearance: none;
    width: 13px;
    height: 13px;
    border: 1px solid #999;
    background: #fff;
}
.check input:checked {
    border: 0;
    background: #2f93f5;
}
.check input:checked::after {
    content: "";
    display: block;
    box-sizing: border-box;
    width: 5px;
    height: 10px;
    margin: 1px 0 0 4px;
    border: solid #fff;
    border-width: 0 2px 2px 0;
    transform: rotate(40deg);
}

/* formula dialog */
.dialog {
    position: absolute;
    left: 699px;
    top: 382px;
    right: -120px;
    bottom: 0;
    display: flex;
    flex-direction: column;
    overflow: hidden;
    border: solid #666;
    border-width: 1px 0 0 1px;
    background: #fff;
}
.dialog h2 {
    height: 31px;
    padding-left: 3px;
    font: 15px/31px "Noto Sans", sans-serif;
}
.dialog-body {
    flex: 1;
    min-height: 0;
    display: flex;
    flex-direction: column;
    padding-left: 4px;
    background: #f4f4f7;
}
.upper {
    display: flex;
    gap: 5px;
    height: 208px;
    flex: none;
}
.formula {
    flex: 1;
}
.formula p {
    height: 26px;
    padding: 7px 0 0 5px;
}
.editor {
    height: 142px;
    background: #fff;
    outline: none;
    font: 12px/13px "DejaVu Sans Mono", monospace;
}
.line {
    height: 15px;
    background: #fffea6;
    white-space: pre;
}
.line b {
    color: #00c;
}
.op {
    color: #8b4a2b;
}
.par {
    color: #f00;
}
.str {
    color: #d6219c;
}
.cursor {
    display: inline-block;
    width: 2px;
    height: 14px;
    vertical-align: top;
    background: #000;
}
.options {
    display: flex;
    align-items: center;
    gap: 13px;
    height: 40px;
    padding: 2px 51px 0 14px;
}
.validity {
    width: 104px;
    height: 20px;
    margin-left: auto;
    border: 1px solid #d9dadd;
    background: #fff;
}
.finder {
    width: 338px;
    padding-top: 2px;
}
.finder-row {
    display: flex;
    gap: 4px;
    margin-bottom: 4px;
}
.finder-row input, .finder-row button {
    width: 206px;
    height: 20px;
    border: 1px solid #d9dadd;
    background: #fff;
}
.finder-row button {
    width: 80px;
}
.results {
    height: 182px;
    border: 1px solid #999;
    background: #fff;
}
.lower {
    flex: 1;
    min-height: 0;
    display: flex;
    gap: 4px;
}
.col {
    display: flex;
    flex-direction: column;
}
.col h4 {
    height: 23px;
    flex: none;
    padding-top: 5px;
}
.fn {
    width: 140px;
}
.list {
    flex: 1;
    border: solid #999;
    border-width: 1px 1px 0;
    background: #fff;
}
.list li {
    height: 17px;
    padding-left: 1px;
    line-height: 17px;
    white-space: nowrap;
}
.list .on {
    background: #419bf9;
    color: #fff;
}
.vars {
    flex: 1;
}
.vars-box {
    flex: 1;
    min-height: 0;
    display: flex;
    justify-content: space-between;
    border: solid #999;
    border-width: 1px 1px 0;
    background: #fff;
}
.var-tree {
    overflow: hidden;
    padding-left: 4px;
}
.var-tree li {
    height: 15px;
    margin-left: 22px;
    padding-left: 13px;
    line-height: 15px;
    border-left: 1px solid #e2e2e2;
    background: linear-gradient(#e2e2e2, #e2e2e2) 0 7px / 9px 1px no-repeat;
}
.var-tree .node {
    display: flex;
    align-items: center;
    height: 16px;
    margin: 0;
    padding: 0;
    border: 0;
    background: none;
}
.var-tree .node i {
    width: 9px;
    height: 1px;
    margin: 0 4px 0 3px;
    background: #e2e2e2;
}
.var-tree .open {
    margin-right: 8px;
}
.var-tree .node svg:last-of-type {
    width: 15px;
    margin-right: 4px;
}
.bar {
    width: 8px;
    margin: 1px 1px 7px 0;
    border-radius: 3px;
    background: #e5e5e6;
}
.desc {
    width: 244px;
}
.desc pre {
    flex: 1;
    padding: 4px;
    line-height: 15px;
    border: 1px solid #d9dadd;
    border-bottom: 0;
    background: #fff;
    overflow: hidden;
}

/* red highlight frames */
.mark {
    position: absolute;
    border: 3px solid #f94343;
    filter: drop-shadow(2px 3px 3px rgba(0, 0, 0, 0.5));
}
.mark-cell {
    left: 770px;
    top: 272px;
    width: 104px;
    height: 34px;
}
.mark-formula {
    left: 682px;
    top: 412px;
    width: 242px;
    height: 86px;
}
```
